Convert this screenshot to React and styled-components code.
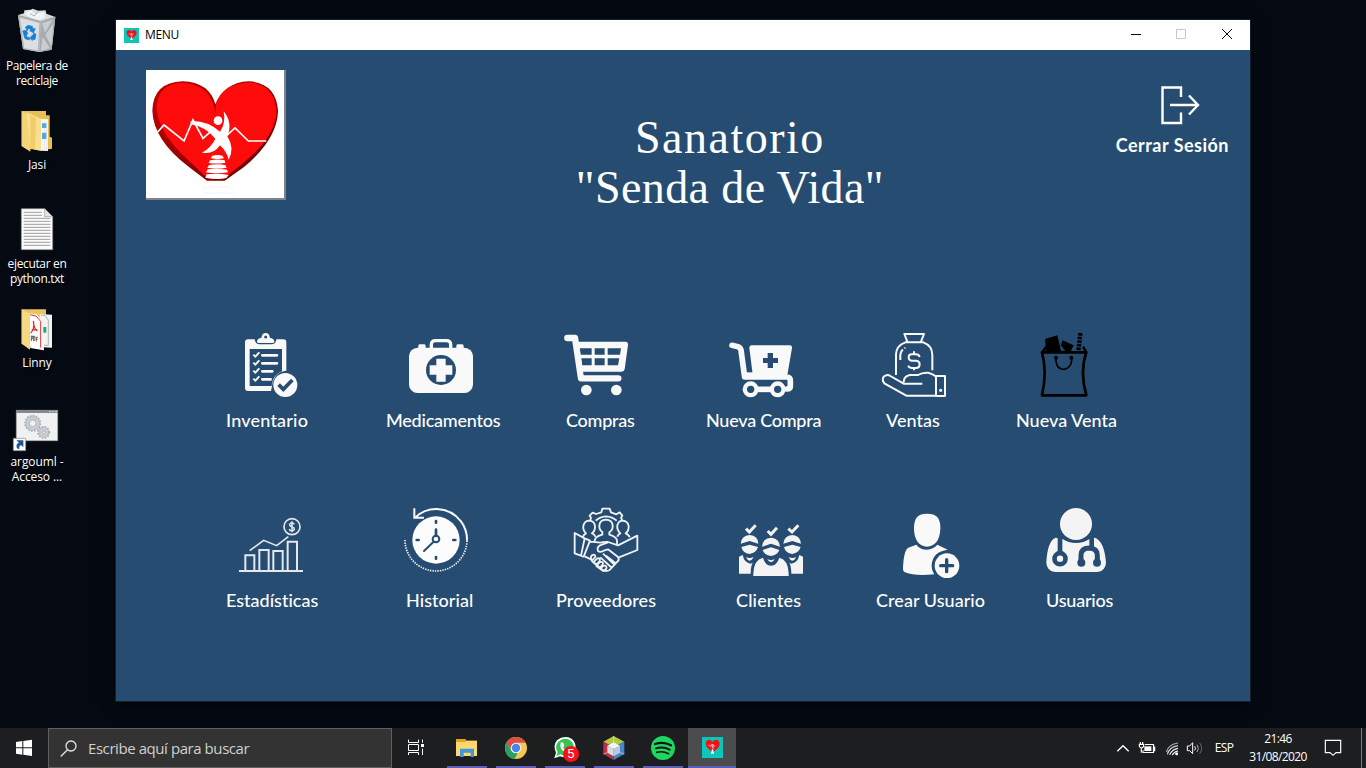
import React from "react";
import styled, { createGlobalStyle } from "styled-components";

const Global = createGlobalStyle`
  * { box-sizing: border-box; }
  html, body { margin: 0; height: 100%; overflow: hidden; background: #050a12; }
  svg { display: block; overflow: visible; flex: none; }
`;

const ui = '"Open Sans", "Noto Sans", sans-serif';
const NAVY = "#264d71";

const Screen = styled.div`
  width: 1366px;
  height: 768px;
  display: flex;
  flex-direction: column;
  background: #050a12;
  font-family: ${ui};
  color: #fff;
  overflow: hidden;
`;
const Desktop = styled.main`
  flex: 1;
  display: flex;
  align-items: flex-start;
`;
const Shortcuts = styled.nav`
  width: 116px;
  padding-top: 8px;
  display: flex;
  flex-direction: column;
`;
const Shortcut = styled.div`
  width: 74px;
  height: 99px;
  display: flex;
  flex-direction: column;
  align-items: center;
`;
const ShortcutLabel = styled.span`
  margin-top: 2px;
  font-size: 12px;
  line-height: 15px;
  letter-spacing: ${(p) => p.$ls || 0}px;
  text-align: center;
  white-space: pre;
  text-shadow: 1px 1px 2px #000;
`;

const Window = styled.section`
  width: 1134px;
  height: 681px;
  margin-top: 20px;
  display: flex;
  flex-direction: column;
  background: ${NAVY};
  box-shadow: 0 0 0 1px #15202b, 0 3px 14px rgba(0, 0, 0, 0.6);
`;
const TitleBar = styled.header`
  height: 30px;
  padding-left: 8px;
  display: flex;
  align-items: center;
  background: #fff;
  color: #000;
  font-size: 12px;
`;
const Caption = styled.span`
  flex: 1;
  margin-left: 6px;
  padding-bottom: 2px;
  letter-spacing: ${(p) => p.$ls || 0}px;
`;
const Control = styled.span`
  width: 46px;
  height: 30px;
  display: grid;
  place-items: center;
`;
const Header = styled.div`
  height: 283px;
  padding: 20px 21px 0 30px;
  display: flex;
  align-items: flex-start;
  justify-content: space-between;
`;
const Logo = styled.div`
  width: 140px;
  height: 130px;
  background: #fff;
  border-right: 2px solid #808488;
  border-bottom: 2px solid #808488;
`;
const Title = styled.h1`
  margin: 43px 0 0 58px;
  font: 400 46px/50px "Liberation Serif", serif;
  text-align: center;
`;
const TitleLine = styled.div`
  letter-spacing: ${(p) => p.$ls}px;
`;
const Logout = styled.div`
  padding-top: 13px;
  display: flex;
  flex-direction: column;
  align-items: center;
`;
const LogoutIcon = styled.div`
  padding-left: 15px;
`;
const LogoutLabel = styled.span`
  margin-top: 7px;
  font: 700 18px/22px Lato, sans-serif;
  letter-spacing: ${(p) => p.$ls || 0}px;
  white-space: nowrap;
`;
const MenuRow = styled.div`
  height: ${(p) => p.$h}px;
  padding-left: 110px;
  display: flex;
`;
const MenuItem = styled.div`
  width: ${(p) => p.$w}px;
  flex: none;
`;
const MenuIcon = styled.div`
  height: 64px;
  margin-left: ${(p) => p.$x}px;
`;
const MenuLabel = styled.div`
  margin-top: ${(p) => p.$gap}px;
  font: 500 18px/22px Lato, sans-serif;
  font-variant-ligatures: none;
  letter-spacing: ${(p) => p.$ls || 0}px;
  white-space: nowrap;
`;

const Taskbar = styled.footer`
  height: 40px;
  display: flex;
  background: #1d1e20;
`;
const StartButton = styled.div`
  width: 48px;
  height: 40px;
`;
const Search = styled.div`
  width: 344px;
  height: 40px;
  display: flex;
  align-items: center;
  background: #333;
  border: 1px solid #5f5f5f;
  padding-left: 11px;
`;
const SearchText = styled.span`
  margin-left: 11px;
  font-size: 15px;
  letter-spacing: ${(p) => p.$ls}px;
  color: #d0d0d0;
`;
const Apps = styled.div`
  display: flex;
  gap: 1px;
  margin-left: 3px;
  flex: 1;
`;
const AppButton = styled.div`
  width: 48px;
  height: 40px;
  position: relative;
  background: ${(p) => (p.$active ? "#4b4c4e" : "transparent")};
  &::after {
    content: "";
    position: absolute;
    bottom: 0;
    left: ${(p) => (p.$active ? 0 : 4)}px;
    right: ${(p) => (p.$active ? 0 : 4)}px;
    height: 2px;
    background: #5c5fb8;
  }
`;
const HeartCell = styled.div`
  display: flex;
  justify-content: center;
  padding-top: 9px;
`;
const Tray = styled.div`
  display: flex;
  align-items: center;
`;
const Lang = styled.span`
  width: 32px;
  padding-bottom: 1px;
  text-align: center;
  font-size: 12px;
  letter-spacing: -0.6px;
`;
const Clock = styled.div`
  width: 76px;
  text-align: center;
  font-size: 12px;
  line-height: 18px;
  letter-spacing: ${(p) => p.$ls}px;
`;
const ShowDesktop = styled.div`
  width: 5px;
  height: 40px;
  border-left: 1px solid #77787a;
`;

const Pic = ({ x, y, w = 64, h = 64, children, ...rest }) => (
  <svg width={w} height={h} viewBox={`${x} ${y} ${w * 3} ${h * 3}`} fill="none" {...rest}>
    {children}
  </svg>
);

const W = "#f9f9fa";

const Inventario = () => (
  <Pic x={87} y={39}>
    <path fill={W} fillRule="evenodd" d="M114 58H134Q135 73 150 73H184Q198 73 199 58H220Q229 58 229 67V152Q212 153 200 165Q188 178 186 198L183 213H114Q105 213 105 204V67Q105 58 114 58ZM119 87V198H185Q187 174 201 163Q207 157 216 154V87Z" />
    <path fill={W} d="M141 66Q141 55 154 54Q156 39 167 39Q178 39 180 54Q193 55 193 66Q193 69 187 69H147Q141 69 141 66Z" />
    <circle cx="167" cy="51" r="4.500" fill={NAVY} />
    <path stroke={W} strokeWidth="8" strokeLinecap="round" d="M157 106H201M157 130H201M157 154H187M157 178H182" />
    <path stroke={W} strokeWidth="6" d="M130 104l6 6 12-13M130 128l6 6 12-13M130 152l6 6 12-13M130 176l6 6 12-13" />
    <circle cx="226" cy="195" r="36" fill={W} />
    <path stroke={NAVY} strokeWidth="11" d="M206 194L220 208L247 180" />
  </Pic>
);
const Medicamentos = () => (
  <Pic x={597} y={39}>
    <rect x="597" y="83" width="192" height="136" rx="26" fill={W} />
    <path fill={W} d="M625 84V77Q625 73 630 73H643Q647 73 647 78V84ZM739 84V77Q739 73 744 73H756Q761 73 761 78V84Z" />
    <path stroke={W} strokeWidth="10" d="M664 88V74Q664 62 677 62H709Q722 62 722 74V88" />
    <circle cx="693" cy="150" r="45" fill={NAVY} />
    <path fill={W} d="M679 116H707V136H727V164H707V185H679V164H659V136H679Z" />
  </Pic>
);
const Compras = () => (
  <Pic x={72} y={39}>
    <path stroke={W} strokeWidth="19" strokeLinecap="round" strokeLinejoin="round" d="M82 54H105L123 175H235" />
    <path fill={W} fillRule="evenodd" d="M108 65H256Q265 66 264 75L254 148Q252 155 245 155H124ZM119 85L121 104H155V85ZM164 85V104H194V85ZM203 85V104H240L243 85ZM123 115L126 136H155V115ZM164 115V136H194V115ZM203 115V136H234L238 115Z" />
    <path stroke={NAVY} strokeWidth="8" d="M131 160H243" />
    <circle cx="139" cy="210" r="16" fill={W} />
    <circle cx="229" cy="210" r="16" fill={W} />
  </Pic>
);
const NuevaCompra = () => (
  <Pic x={567} y={39}>
    <path stroke={W} strokeWidth="17" strokeLinecap="round" strokeLinejoin="round" d="M576 76L594 80Q601 82 603 90L614 171H740Q751 171 751 182V198Q751 207 741 207" />
    <path fill={W} d="M634 76H749Q757 76 756 84L743 160L735 176H649L638 162L628 84Q628 76 634 76Z" />
    <path fill={W} d="M607 157H640V174H607Z" />
    <path fill={NAVY} d="M683 99H699V114H714V129H699V144H683V129H669V114H683Z" />
    <path stroke={W} strokeWidth="17" d="M648 208H697" />
    <circle cx="632" cy="208" r="24" fill={W} />
    <circle cx="713" cy="208" r="24" fill={W} />
    <circle cx="632" cy="208" r="11" fill={NAVY} />
    <circle cx="713" cy="208" r="11" fill={NAVY} />
  </Pic>
);
const Ventas = () => (
  <Pic x={66} y={39} stroke={W} strokeWidth="6" strokeLinejoin="round">
    <path d="M108 165V103Q109 77 136 67H190Q217 77 217 105V151M142 65L133 42H192L183 65M121 120Q119 95 129 89M134 85l2-2" />
    <path d="M179 111Q177 103 167 103H155Q146 103 146 112Q146 121 155 122H169Q179 123 179 133Q178 144 168 144H155Q146 143 145 137M162 94V103M162 144V151" />
    <path d="M69 185Q66 171 76 167Q83 163 91 168L131 191H187M131 187Q131 168 150 165H174Q186 157 204 158Q217 161 227 169M69 183L73 190L139 227H228" />
    <path d="M228 168H255V228H228Z" />
    <circle cx="242" cy="211" r="2" />
  </Pic>
);
const NuevaVenta = () => (
  <Pic x={516} y={39}>
    <path fill="#000" d="M555 57L592 46L603 92H616L602 76L608 61L641 76L632 94H558Z" />
    <path stroke="#000" strokeWidth="8" strokeLinejoin="round" d="M546 97H679Q659 154 679 226H546Q562 154 546 97ZM546 97L560 80M679 97L669 80" />
    <path stroke="#000" strokeWidth="13" strokeDasharray="8 3" d="M661 39L655 94" />
    <path stroke="#000" strokeWidth="5" d="M588 114V122Q590 148 611 148Q632 146 635 121V114" />
    <circle cx="588" cy="113" r="6" fill="#000" />
    <circle cx="634" cy="113" r="6" fill="#000" />
  </Pic>
);
const Estadisticas = () => (
  <Pic x={87} y={24} stroke="#e4e8ee" strokeWidth="6">
    <path d="M87 213H279M106 211V166H133V211M148 211V150H176V211M190 211V153H218V211M233 211V125H261V211" />
    <path d="M119 152L161 121L200 137L235 110" strokeWidth="5" />
    <circle cx="246" cy="80" r="24" strokeWidth="5" />
    <path strokeWidth="4.500" d="M253 73Q250 68 245 69Q238 70 239 75Q240 79 246 80Q253 82 253 87Q252 93 245 93Q239 92 238 87M246 64V97" />
  </Pic>
);
const Historial = () => (
  <Pic x={582} y={24}>
    <circle cx="678" cy="120" r="71" fill="#fcfcfd" />
    <path stroke={W} strokeWidth="6" d="M615 53Q643 26 681 27Q726 29 753 64Q772 90 771 122M613 25V53H642" />
    <path stroke={W} strokeWidth="5" strokeDasharray="4 3.500" d="M585 120A93 93 0 0 0 771 120" />
    <path stroke={NAVY} strokeWidth="8" strokeLinecap="round" d="M678 63V68M678 171V176M620 120H626M730 120H736M678 89V108" />
    <path stroke={NAVY} strokeWidth="6" strokeLinecap="round" d="M670 126L642 153" />
    <circle cx="678" cy="117" r="10" stroke={NAVY} strokeWidth="6" />
  </Pic>
);
const Proveedores = () => (
  <Pic x={102} y={24} stroke="#f1f2f5" strokeWidth="5.500" strokeLinejoin="round">
    <path d="M151 60L153 53L149 47L158 38L168 42L184 37L187 26H209L213 37L229 43L239 37L247 47L243 54L247 60" />
    <path d="M167 62Q180 50 198 49Q217 50 230 62" />
    <path d="M128 112Q130 104 138 100Q128 91 130 77Q134 62 148 62Q163 63 165 78Q166 92 156 100Q164 103 166 110M232 110Q234 103 241 100Q230 89 232 76Q236 62 248 62Q263 63 266 78Q267 92 257 100Q267 104 269 112" />
    <path d="M164 128V122Q166 109 187 104V96Q177 89 178 76Q180 60 198 59Q216 60 218 76Q219 90 208 97V104Q229 110 231 121V133" />
    <path d="M104 99L134 115L150 122L131 170L104 160ZM134 115L123 167M150 125L182 128Q192 125 204 126L234 136L292 107V150L237 172" />
    <path d="M204 127L180 136Q170 142 174 153Q181 159 194 151L204 148L235 172Q239 181 230 187L209 210Q198 216 188 210L154 181M189 161L222 193M198 167L229 191M181 172L216 204M134 169L153 178" />
    <path d="M153 178Q151 170 157 165Q166 162 166 171L156 182ZM160 187L172 175Q182 173 179 183L169 194ZM169 198L180 186Q192 184 188 194L178 205ZM181 207L190 197Q202 195 199 206L190 213Z" />
  </Pic>
);
const Clientes = () => (
  <Pic x={597} y={24}>
    <path stroke="#f3f3f4" strokeWidth="9" d="M618 86L628 96L647 76M683 93L693 103L711 83M745 86L756 96L775 76" />
    <path fill="#f3f3f4" d="M602 131Q604 107 629 105Q654 107 655 131L629 123ZM730 131Q732 107 757 105Q781 107 783 131L757 123ZM666 140Q668 114 693 113Q718 115 720 140L693 131Z" />
    <path fill="#f3f3f4" d="M604 141L629 134L654 141Q649 158 629 162Q608 159 604 141ZM732 141L757 134L782 141Q777 158 757 162Q736 159 732 141ZM668 150L693 142L718 150Q713 165 693 168Q672 165 668 150Z" />
    <path fill="#f3f3f4" d="M618 171Q629 177 640 171Q637 181 629 182Q622 181 618 171ZM746 171Q757 177 768 171Q765 181 757 182Q750 181 746 171ZM682 178Q693 183 704 178Q700 186 693 187Q686 186 682 178Z" />
    <path fill="#f3f3f4" d="M597 170L608 165Q613 189 632 191L638 188Q632 199 632 221H597ZM789 170L778 165Q773 189 754 191L748 188Q754 199 754 221H789Z" />
    <path fill="#f3f3f4" d="M669 173Q675 196 693 197Q711 196 718 173Q745 180 746 220V228H640V220Q641 180 669 173Z" />
  </Pic>
);
const CrearUsuario = () => (
  <Pic x={117} y={24}>
    <path fill={W} d="M201 41Q226 41 234 54Q242 66 241 88Q238 138 201 140Q165 137 162 89Q161 67 169 54Q177 41 201 41Z" />
    <path fill={W} d="M129 205Q131 150 145 143L169 134Q180 149 201 149Q220 148 232 134L263 149Q218 155 215 195Q215 213 223 223Q165 229 135 217Q128 214 129 205Z" />
    <circle cx="261" cy="197" r="37" fill={W} />
    <path stroke={NAVY} strokeWidth="10" strokeLinecap="round" d="M242 197H278M260 179V215" />
  </Pic>
);
const Usuarios = () => (
  <Pic x={552} y={24}>
    <circle cx="648" cy="72" r="48" fill="#f4f4f4" />
    <path fill="#f4f4f4" d="M587 113L609 118Q624 129 648 129Q672 129 687 118L704 113Q733 123 738 188Q737 213 711 216H586Q560 213 559 188Q562 123 587 113Z" />
    <path stroke={NAVY} strokeWidth="14" d="M600 112V158M695 110V143" />
    <circle cx="600" cy="176" r="16.500" stroke={NAVY} strokeWidth="14" />
    <path stroke={NAVY} strokeWidth="15" d="M663 184V165Q664 144 688 144Q711 145 712 165V184" />
    <circle cx="664" cy="188" r="12" fill={NAVY} />
    <circle cx="711" cy="188" r="12" fill={NAVY} />
  </Pic>
);

const rowOne = [
  ["Inventario", 160, 13, Inventario, 0.2],
  ["Medicamentos", 180, 23, Medicamentos, -0.22],
  ["Compras", 140, -2, Compras, -0.25],
  ["Nueva Compra", 180, 23, NuevaCompra, -0.25],
  ["Ventas", 130, -4, Ventas, 0],
  ["Nueva Venta", 120, 16, NuevaVenta, 0],
];
const rowTwo = [
  ["Estadísticas", 180, 13, Estadisticas, 0],
  ["Historial", 150, -2, Historial, 0.05],
  ["Proveedores", 180, 18, Proveedores, 0.1],
  ["Clientes", 140, 3, Clientes, 0.15],
  ["Crear Usuario", 170, 23, CrearUsuario, 0.05],
  ["Usuarios", 120, -2, Usuarios, -0.2],
];

const Menu = ({ items, height, gap }) => (
  <MenuRow $h={height}>
    {items.map(([label, w, x, Icon, ls]) => (
      <MenuItem key={label} $w={w}>
        <MenuIcon $x={x}><Icon /></MenuIcon>
        <MenuLabel $gap={gap} $ls={ls}>{label}</MenuLabel>
      </MenuItem>
    ))}
  </MenuRow>
);

const HeartArt = () => (
  <Pic x={90} y={165} w={138} h={128}>
    <defs>
      <linearGradient id="rim" x1="0" x2="1" y2="0.600">
        <stop offset="0" stopColor="#c30000" />
        <stop offset="1" stopColor="#730000" />
      </linearGradient>
    </defs>
    <path fill="url(#rim)" d="M298 268Q280 202 200 199Q111 202 109 287Q112 375 218 455L273 497H326L383 457Q484 373 486 287Q480 203 398 199Q327 202 298 268Z" />
    <path fill="#ff0b0b" d="M299 296Q288 209 202 203Q125 204 122 280Q126 352 214 433L276 491H323L378 447Q480 365 482 287Q474 205 397 202Q318 208 299 268Z" />
    <path stroke="#fff" strokeWidth="5" d="M125 351L144 330L204 378L231 315L261 370L288 346M322 371L357 339L397 378H451" />
    <circle cx="306" cy="317" r="13" fill="#fff" />
    <path fill="#fff" d="M224 318Q274 316 312 350Q330 326 323 289Q351 323 334 364Q357 400 338 434Q332 410 312 391Q293 419 258 413Q286 397 298 371Q269 335 224 328Z" />
    <path fill="#fff" d="M289 422Q304 418 319 422L324 430Q304 434 284 430ZM282 436Q304 431 326 436L328 443Q304 448 278 444ZM279 450Q304 446 328 450L332 458Q304 463 274 458ZM275 463Q304 459 333 464L336 472Q304 478 270 472ZM272 478Q304 474 338 480L331 489Q304 495 268 488Z" />
    <path stroke="#f0f6f4" strokeWidth="2" d="M262 505Q306 494 346 505L341 515H266ZM258 522Q306 512 354 522L349 532H263ZM254 539Q306 529 358 539" />
  </Pic>
);

const SmallHeart = ({ size }) => (
  <svg width={size} height={size} viewBox="0 0 63 63" fill="none">
    <rect width="63" height="63" fill="#0cc6b9" />
    <path fill="#f01219" d="M31 15Q27 8 21 8Q11 9 11 21Q12 31 21 37L28 44H35L44 37Q53 30 53 20Q52 8 42 8Q34 9 31 15Z" />
    <path stroke="#fff" strokeWidth="2" d="M20 27L23 24L27 28L29 22L37 28L40 26M34 21L30 32L36 33" />
    <path fill="#fff" d="M29 37H34V44H36V50H27V44H29Z" />
  </svg>
);

const Bin = () => (
  <Pic x={39} y={24} w={48} h={48}>
    <path fill="#d9dcde" d="M54 45L72 40L73 31L92 29L98 26L115 32L137 31L139 41L166 51L155 149L118 156L69 147Z" />
    <path fill="#b3b8bb" d="M54 46L122 64L118 156L69 147Z" />
    <path fill="#dcdee0" d="M60 53L118 69L113 151L73 144Z" />
    <path fill="#a5abaf" d="M122 66L166 51L155 149L118 156Z" />
    <path fill="#c9cdcf" d="M126 70L158 59L135 98ZM160 70L155 140L136 105ZM128 110L150 145L122 152Z" />
    <path fill="#f2f3f3" d="M74 41L92 30L108 42L131 35L136 53L118 60L88 52Z" />
    <path stroke="#8e9498" strokeWidth="2" d="M54 46L121 65L166 51M90 41L103 48L112 36" />
    <g fill="#1480d8" stroke="#1480d8" strokeWidth="2">
      <path d="M76 82L84 76L97 79L99 86L106 86L100 98L89 92L93 89L86 85L82 92Z" />
      <path d="M68 93L79 91L84 102L80 101L80 111L89 113L88 120L75 116Z" />
      <path d="M101 98L108 103L105 119L97 118V122L90 113L98 105V111Z" />
    </g>
  </Pic>
);
const FolderJasi = () => (
  <Pic x={39} y={321} w={48} h={48}>
    <path fill="#e9bf54" d="M65 333H138V346H149V410L156 413V446L149 448H80L65 438Z" />
    <path fill="#f8f8f8" d="M109 356L144 358V453L122 452Z" />
    <path stroke="#bcc4ca" strokeWidth="2" strokeDasharray="3 3" d="M133 365V450M140 367V450" />
    <path fill="#55a9df" d="M126 370H139V384H126ZM126 398H139V417H126Z" />
    <path fill="#f4d477" d="M65 333L91 345V455L65 438Z" />
    <path fill="#fbdf90" d="M80 337L123 356V453L105 449L91 444Z" />
    <path fill="#f2cb6b" d="M91 345L108 355L105 449L91 444Z" />
  </Pic>
);
const TextFile = () => (
  <Pic x={39} y={618} w={48} h={48}>
    <path fill="#fafafa" stroke="#8a8a8a" strokeWidth="2" d="M64 626H134L158 650V749H64Z" />
    <path fill="#e3e3e3" stroke="#999" strokeWidth="2" d="M134 626V650H158Z" />
    <path stroke="#a0a0a0" strokeWidth="3" d="M71 637H126M71 646H126M71 655H151M71 664H151M71 673H151M71 682H151M71 691H151M71 700H151M71 709H151M71 718H151M71 727H151M71 736H151" />
  </Pic>
);
const FolderLinny = () => (
  <Pic x={39} y={165} w={48} h={48}>
    <path fill="#e9c263" d="M65 178H138V290H90L65 281Z" />
    <path fill="#f3f3f3" d="M119 192L156 194V293L130 292Z" />
    <path stroke="#85958d" strokeWidth="2" d="M123 196H135L145 210V286H132" />
    <path fill="#2aa56b" d="M130 231H139V248H130Z" />
    <path fill="#fff" d="M83 190L110 193L124 211L132 301L91 294Z" />
    <path stroke="#e3342d" strokeWidth="3" d="M84 193L108 198L122 214V293" />
    <path stroke="#d9312b" strokeWidth="4" d="M100 213Q105 237 92 249M101 223Q105 240 113 243M95 240L111 239" />
    <path stroke="#464646" strokeWidth="2.500" d="M94 273V258H98V266H94M101 258V273Q106 271 105 260ZM109 275V262H114M109 268H113" />
    <path fill="#f6d782" d="M65 178L90 192V299L65 281Z" />
  </Pic>
);
const Gear = ({ cx, cy, r }) => (
  <g>
    <circle cx={cx} cy={cy} r={r} stroke="#a3abb1" strokeWidth="5" strokeDasharray="5 4" />
    <circle cx={cx} cy={cy} r={r - 7} stroke="#c5cdd3" strokeWidth="10" />
    <circle cx={cx} cy={cy} r={r - 2} stroke="#a3abb1" strokeWidth="1.500" />
    <circle cx={cx} cy={cy} r={r - 13} stroke="#939ba1" strokeWidth="2" fill="#f1f1f2" />
  </g>
);
const Argo = () => (
  <Pic x={39} y={462} w={48} h={48}>
    <path fill="#f1f1f2" stroke="#a7a9ac" strokeWidth="2" d="M49 481H173V572H49Z" />
    <path fill="#85898f" d="M48 480H174V489H48Z" />
    <path stroke="#d9dadc" strokeWidth="3" strokeDasharray="6 3" d="M147 485H172" />
    <Gear cx={98} cy={520} r={23} />
    <Gear cx={131} cy={547} r={17} />
    <path fill="#fff" stroke="#8c8c8c" strokeWidth="2" d="M40 565H77V602H40Z" />
    <path fill="#1d5597" d="M49 571H70V592L63 585Q56 588 58 598Q47 595 50 584Q52 579 57 578Z" />
  </Pic>
);

const shortcuts = [
  ["Papelera de\nreciclaje", Bin, -0.42],
  ["Jasi", FolderJasi, -0.1],
  ["ejecutar en\npython.txt", TextFile, -0.35],
  ["Linny", FolderLinny, -0.1],
  ["argouml -\nAcceso ...", Argo, -0.1],
];

const appIcons = [
  <>
    <path fill="#e6a417" d="M48 57H76L80 62H110V80H48Z" />
    <path fill="#ffd970" d="M48 66H76L80 62H111V108H48Z" />
    <path fill="#3f97dc" d="M60 111V86H102V111H92V98H71V111Z" />
  </>,
  <>
    <circle cx="228" cy="84" r="33" fill="#f5c94f" />
    <path fill="#db4f42" d="M199 68Q209 51 228 51Q248 51 257 68H228L214 91Z" />
    <path fill="#26a164" d="M199 67L214 92Q220 100 233 99L224 117Q196 114 195 84Q195 75 199 67Z" />
    <circle cx="228" cy="84" r="16" fill="#f4f4f4" />
    <circle cx="228" cy="84" r="12.500" fill="#4a84ef" />
  </>,
  <>
    <path fill="#fff" d="M343 115L348 98Q338 77 351 61Q366 48 385 52Q407 59 407 83Q405 109 377 112Q366 112 360 109Z" />
    <path fill="#35c553" d="M349 109L353 97Q343 78 355 65Q368 53 385 58Q401 65 401 83Q398 105 376 107Q368 107 361 103Z" />
    <path fill="#fff" d="M362 68L369 67L373 77L369 82Q374 91 382 94L388 89V100Q379 102 369 94Q358 82 362 68Z" />
    <circle cx="393" cy="102" r="24" fill="#f6121b" />
    <text x="393" y="115" fill="#fff" fontFamily="Liberation Sans, sans-serif" fontSize="38" textAnchor="middle">5</text>
  </>,
  <>
    <path fill="#b0c944" d="M521 48L553 65L521 82L490 65Z" />
    <path fill="#b8304d" d="M490 65L521 82V120L490 102Z" />
    <path fill="#4486c8" d="M553 65L521 82V120L553 102Z" />
    <path fill="#f3f6f6" d="M521 67L540 77L521 87L502 77Z" />
    <path fill="#d6dee5" d="M502 77L521 87V109L502 98Z" />
    <path fill="#b9cbd9" d="M540 77L521 87V109L540 98Z" />
    <path stroke="#e2e3ba" strokeWidth="2" d="M521 48V67M490 102L502 98M553 102L540 98" />
  </>,
  <>
    <circle cx="669" cy="84" r="36" fill="#1ed760" />
    <path stroke="#101413" strokeLinecap="round" strokeWidth="7" d="M645 72Q671 64 693 76" />
    <path stroke="#101413" strokeLinecap="round" strokeWidth="6" d="M648 85Q670 78 689 89" />
    <path stroke="#101413" strokeLinecap="round" strokeWidth="5" d="M650 97Q669 92 686 101" />
  </>,
];

export default function App() {
  return (
    <Screen>
      <Global />
      <Desktop>
        <Shortcuts>
          {shortcuts.map(([label, Icon, ls]) => (
            <Shortcut key={label}>
              <Icon />
              <ShortcutLabel $ls={ls}>{label}</ShortcutLabel>
            </Shortcut>
          ))}
        </Shortcuts>
        <Window>
          <TitleBar>
            <SmallHeart size={15} />
            <Caption $ls={-0.3}>MENU</Caption>
            <Control><svg width="10" height="10"><path stroke="#000" d="M1 4.500H11" /></svg></Control>
            <Control><svg width="10" height="10" fill="none"><path stroke="#c8c8c8" d="M.5 -.5H9.500V8.500H.5Z" /></svg></Control>
            <Control><svg width="10" height="10"><path stroke="#000" d="M0 -1L10 9M10 -1L0 9" /></svg></Control>
          </TitleBar>
          <Header>
            <Logo><HeartArt /></Logo>
            <Title>
              <TitleLine $ls={1.5}>Sanatorio</TitleLine>
              <TitleLine $ls={0.4}>"Senda de Vida"</TitleLine>
            </Title>
            <Logout>
              <LogoutIcon>
                <svg width="38" height="44" viewBox="0 0 38 44" fill="none" stroke="#fff" strokeWidth="2.400">
                  <path d="M20 14V4.500H1.500V40H20V29.500M9 22H37M28 12.500L37 22L28 31.500" />
                </svg>
              </LogoutIcon>
              <LogoutLabel $ls={0.48}>Cerrar Sesión</LogoutLabel>
            </Logout>
          </Header>
          <Menu items={rowOne} height={175} gap={12} />
          <Menu items={rowTwo} height={150} gap={17} />
        </Window>
      </Desktop>
      <Taskbar>
        <StartButton>
          <Pic x={0} y={24} w={48} h={40}>
            <path fill="#fff" d="M48 66L67 63V82H48ZM70 63L96 59V82H70ZM48 85H67V104L48 101ZM70 85H96V108L70 104Z" />
          </Pic>
        </StartButton>
        <Search>
          <svg width="17" height="17" viewBox="0 0 17 17" fill="none" stroke="#e4e4e4" strokeWidth="1.300">
            <circle cx="11" cy="6" r="5" /><path d="M7.500 9.800L.7 16.500" />
          </svg>
          <SearchText $ls={-0.43}>Escribe aquí para buscar</SearchText>
        </Search>
        <Pic x={1176} y={24} w={48} h={40} stroke="#fff" strokeWidth="3">
          <path d="M1225.500 59V67.500H1255.500V59M1225.500 105V97.500H1255.500V105M1225.500 73.500H1255.500V91.500H1225.500ZM1267.500 59V68M1267.500 86V105" />
          <path fill="#fff" stroke="none" d="M1263 72H1272V81H1263Z" />
        </Pic>
        <Apps>
          {appIcons.map((icon, i) => (
            <AppButton key={i}><Pic x={9 + 147 * i} y={24} w={48} h={40}>{icon}</Pic></AppButton>
          ))}
          <AppButton $active><HeartCell><SmallHeart size={21} /></HeartCell></AppButton>
        </Apps>
        <Tray>
          <Pic x={63} y={24} w={24} h={40}><path stroke="#fff" strokeWidth="4" d="M82 94L99 77L116 94" /></Pic>
          <Pic x={135} y={24} w={24} h={40}>
            <path stroke="#fff" strokeWidth="3.500" d="M165 73.500H190.500V97.500H159V91M190 81H194V92H190M151 66V73M158 66V73M148 73H161V79Q159 84 154 84Q149 83 148 78ZM154 84V98" />
            <path fill="#fff" d="M163 79H184V93H163Z" />
          </Pic>
          <Pic x={207} y={24} w={25} h={40} strokeWidth="3.500">
            <path stroke="#aaa" d="M229 96Q236 73 264 69" />
            <path stroke="#ccc" d="M232 103Q238 81 264 77" />
            <path stroke="#eee" d="M239 104Q246 88 264 85" />
            <path stroke="#fff" d="M247 105Q252 95 264 93" />
            <circle cx="260" cy="101" r="4.500" fill="#fff" />
          </Pic>
          <Pic x={282} y={24} w={24} h={40} strokeWidth="3">
            <path stroke="#fff" d="M292 78H299L308 68V101L299 92H292ZM314 79Q319 85 314 91" />
            <path stroke="#aaa" d="M321 74Q329 85 321 96" />
            <path stroke="#666" d="M329 69Q341 85 329 101" />
          </Pic>
          <Lang>ESP</Lang>
          <Clock $ls={-0.6}>21:46<br />31/08/2020</Clock>
          <Pic x={678} y={24} w={45} h={40}><path stroke="#fff" strokeWidth="3.500" d="M706 61H752V98H738L729 106L720 98H706Z" /></Pic>
          <ShowDesktop />
        </Tray>
      </Taskbar>
    </Screen>
  );
}
